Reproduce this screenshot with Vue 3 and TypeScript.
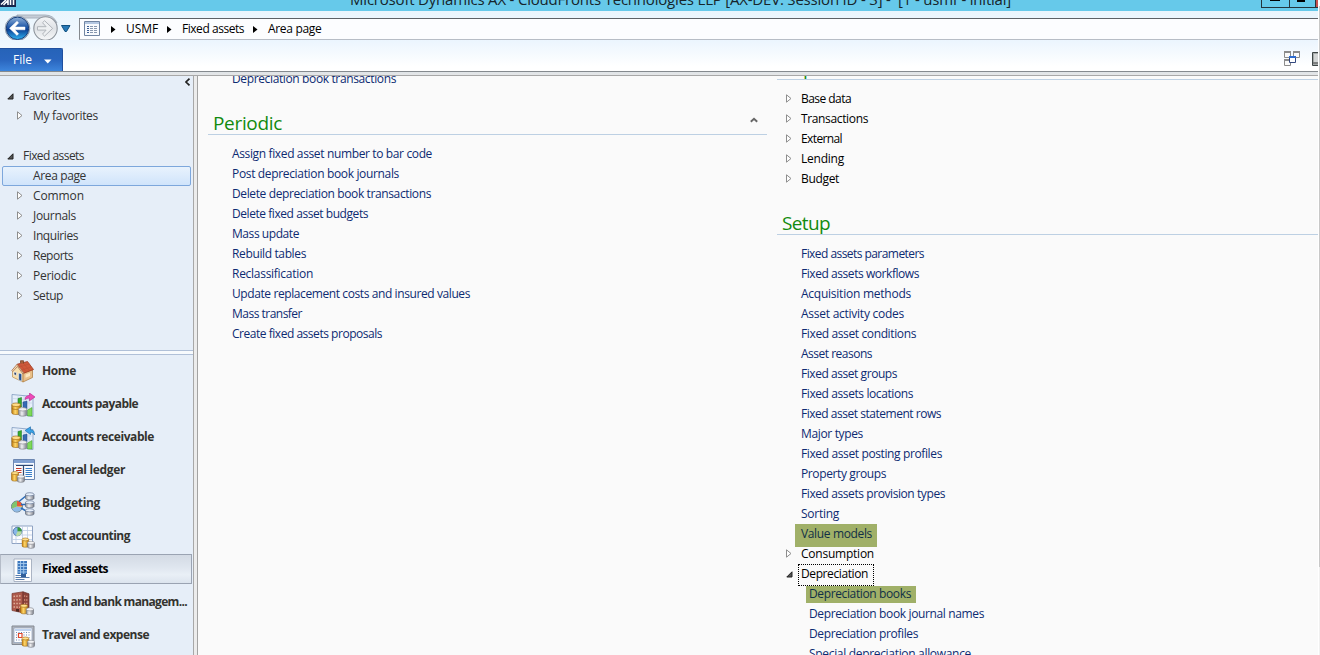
<script setup lang="ts">
interface Item { t: string; w: number; kind?: 'closed' | 'open' | 'sub'; mark?: 'wide' | 'tight' }

// Spreads the letters of a label so that it spans the given width.
const fit = (el: HTMLElement, { value }: { value: number }) => {
  el.style.letterSpacing = '0px'
  const natural = el.getBoundingClientRect().width
  const count = (el.textContent ?? '').length
  if (count) el.style.letterSpacing = `${((value - natural) / count).toFixed(3)}px`
}
const vFit = { mounted: fit }

const crumbs: Item[] = [
  { t: 'USMF', w: 32 }, { t: 'Fixed assets', w: 62 }, { t: 'Area page', w: 53.5 },
]
const tree = [
  { t: 'Common', w: 51 }, { t: 'Journals', w: 43 }, { t: 'Inquiries', w: 45 },
  { t: 'Reports', w: 40 }, { t: 'Periodic', w: 43 }, { t: 'Setup', w: 30 },
]
const modules = [
  { t: 'Home', w: 34, icon: 'home' },
  { t: 'Accounts payable', w: 96, icon: 'payable' },
  { t: 'Accounts receivable', w: 112, icon: 'receivable' },
  { t: 'General ledger', w: 83, icon: 'ledger' },
  { t: 'Budgeting', w: 58, icon: 'budget' },
  { t: 'Cost accounting', w: 88, icon: 'cost' },
  { t: 'Fixed assets', w: 66, icon: 'assets' },
  { t: 'Cash and bank managem...', w: 145, icon: 'bank' },
  { t: 'Travel and expense', w: 107, icon: 'travel' },
]
const periodic: Item[] = [
  { t: 'Assign fixed asset number to bar code', w: 200 },
  { t: 'Post depreciation book journals', w: 167 },
  { t: 'Delete depreciation book transactions', w: 199 },
  { t: 'Delete fixed asset budgets', w: 136 },
  { t: 'Mass update', w: 67 },
  { t: 'Rebuild tables', w: 74 },
  { t: 'Reclassification', w: 81 },
  { t: 'Update replacement costs and insured values', w: 238 },
  { t: 'Mass transfer', w: 70 },
  { t: 'Create fixed assets proposals', w: 150 },
]
const reports: Item[] = [
  { t: 'Base data', w: 50, kind: 'closed' },
  { t: 'Transactions', w: 67, kind: 'closed' },
  { t: 'External', w: 41, kind: 'closed' },
  { t: 'Lending', w: 43, kind: 'closed' },
  { t: 'Budget', w: 38, kind: 'closed' },
]
const setup: Item[] = [
  { t: 'Fixed assets parameters', w: 123 },
  { t: 'Fixed assets workflows', w: 118 },
  { t: 'Acquisition methods', w: 110 },
  { t: 'Asset activity codes', w: 103 },
  { t: 'Fixed asset conditions', w: 115 },
  { t: 'Asset reasons', w: 71 },
  { t: 'Fixed asset groups', w: 96 },
  { t: 'Fixed assets locations', w: 112 },
  { t: 'Fixed asset statement rows', w: 140 },
  { t: 'Major types', w: 62 },
  { t: 'Fixed asset posting profiles', w: 141 },
  { t: 'Property groups', w: 85 },
  { t: 'Fixed assets provision types', w: 144 },
  { t: 'Sorting', w: 38 },
  { t: 'Value models', w: 71, mark: 'wide' },
  { t: 'Consumption', w: 73, kind: 'closed' },
  { t: 'Depreciation', w: 67, kind: 'open' },
  { t: 'Depreciation books', w: 102, kind: 'sub', mark: 'tight' },
  { t: 'Depreciation book journal names', w: 175, kind: 'sub' },
  { t: 'Depreciation profiles', w: 109, kind: 'sub' },
  { t: 'Special depreciation allowance', w: 162, kind: 'sub' },
]
const rightSections = [
  { title: 'Reports', w: 64, items: reports },
  { title: 'Setup', w: 48, items: setup },
]
</script>

<template>
  <div class="window">
    <svg class="defs" width="0" height="0">
      <defs>
        <linearGradient id="gold" x1="0" x2="1" y1="0" y2="0">
          <stop offset="0" stop-color="#c07c10" /><stop offset=".4" stop-color="#ffd769" /><stop offset="1" stop-color="#b87408" />
        </linearGradient>
        <linearGradient id="silver" x1="0" x2="1" y1="0" y2="0">
          <stop offset="0" stop-color="#8d9097" /><stop offset=".4" stop-color="#f1f1f3" /><stop offset="1" stop-color="#7b7e88" />
        </linearGradient>
        <linearGradient id="backFill" x1="0" x2="0" y1="0" y2="1">
          <stop offset="0" stop-color="#8fb0d8" /><stop offset=".45" stop-color="#1f57a8" /><stop offset=".55" stop-color="#0c3f94" /><stop offset="1" stop-color="#2fb3f2" />
        </linearGradient>
        <linearGradient id="fwdFill" x1="0" x2="0" y1="0" y2="1">
          <stop offset="0" stop-color="#f4f5f7" /><stop offset=".5" stop-color="#dfe2e6" /><stop offset="1" stop-color="#f7f8f9" />
        </linearGradient>
        <symbol id="coins" viewBox="0 0 14 12">
          <path d="M.5 2.500v6.500c0 1.800 7 1.800 7 0V2.500z" fill="url(#gold)" stroke="#a06a14" stroke-width=".6" />
          <ellipse cx="4" cy="2.300" rx="3.500" ry="1.500" fill="#ffe08c" stroke="#a06a14" stroke-width=".6" />
          <path d="M6.300 6v4c0 2 7.200 2 7.200 0V6z" fill="url(#silver)" stroke="#70737b" stroke-width=".6" />
          <ellipse cx="9.900" cy="5.800" rx="3.600" ry="1.600" fill="#f2f2f4" stroke="#7d8088" stroke-width=".6" />
        </symbol>
        <symbol id="chart" viewBox="0 0 24 24">
          <path d="M1 1.500l21 2v20L1 20z" fill="#e6effa" stroke="#8aa3c5" stroke-width=".9" />
          <path d="M2 5.500l19 1.500M2 10h19M7 2v18M13 3v18M18 3v19" stroke="#c3d3e9" stroke-width=".7" />
          <path d="M7 5.500l3.500-1V14H7z" fill="#37ab2f" stroke="#187020" stroke-width=".5" />
          <path d="M12 9l4-1v8h-4z" fill="#366bb4" stroke="#1b4583" stroke-width=".5" />
          <path d="M16.500 17l4.500-2.500V23h-4.500z" fill="#7ed957" stroke="#3a9a28" stroke-width=".5" />
          <path d="M.8 12v8c0 2 8.600 2 8.600 0v-8z" fill="url(#gold)" stroke="#9c6710" stroke-width=".6" />
          <path d="M.8 15.300c1 1.600 7.600 1.600 8.600 0" fill="none" stroke="#9c6710" stroke-width=".6" />
          <ellipse cx="5.100" cy="11.800" rx="4.300" ry="1.800" fill="#ffdc86" stroke="#9c6710" stroke-width=".6" />
          <path d="M7.600 16.500v5c0 2.200 8.200 2.200 8.200 0v-5z" fill="url(#silver)" stroke="#74767c" stroke-width=".6" />
          <ellipse cx="11.700" cy="16.300" rx="4.100" ry="1.700" fill="#f0f0f1" stroke="#85878c" stroke-width=".6" />
        </symbol>
      </defs>
    </svg>

    <header class="titlebar">
      <svg class="app-icon" width="16" height="7" viewBox="0 0 16 7">
        <path d="M0 0h16v7H0z" fill="#16254c" /><path d="M1 4.500L6 0M3.500 5L8 .5V5M10.500 0v5M13.500 0v5" stroke="#fff" stroke-width="1.600" fill="none" />
      </svg>
      <span v-fit="661" class="title">Microsoft Dynamics AX - CloudFronts Technologies LLP [AX-DEV: Session ID - 3] -&nbsp; [1 - usmf - initial]</span>
      <div class="controls"><i class="min" /><i class="max" /><i class="close" /></div>
    </header>

    <nav class="address-row">
      <svg class="nav-buttons" width="76" height="29" viewBox="0 0 76 29">
        <path d="M17 4h28a13 13 0 0 1 12 8L50 7H17z" fill="#c5ccd6" stroke="#a9b2be" />
        <circle cx="17.500" cy="17.300" r="12.300" fill="#d8e1ec" stroke="#8793a5" stroke-width=".9" />
        <circle cx="17.500" cy="17.300" r="11.200" fill="url(#backFill)" stroke="#173e7a" />
        <path d="M9.500 17.300L17 10.300l1.600 1.500-3.700 4.200H25v2.800H14.900l3.700 4-1.600 1.600z" fill="#fff" stroke="#fff" stroke-width=".5" stroke-linejoin="round" />
        <circle cx="45.500" cy="17.500" r="11.700" fill="url(#fwdFill)" stroke="#8e949c" stroke-width="1.100" />
        <path d="M37.500 15.700h8.600l-3.600-4 2.100-2 8 7.700-8 7.700-2.100-2 3.600-4h-8.600z" fill="#eef0f2" stroke="#b1b5bb" />
        <path d="M61.500 14.500h8.500L66.500 20.500h-1.500z" fill="#2779b7" stroke="#125180" />
      </svg>
      <div class="address">
        <svg width="16" height="15" viewBox="0 0 16 15">
          <path d="M.5.5h15v14H.5z" fill="#f8fafd" stroke="#7185a2" /><path d="M1 1h14v2H1z" fill="#b4c7e1" />
          <path d="M3 5.500h2M3 7.500h2M3 9.500h2M3 11.500h2" stroke="#3b5e96" /><path d="M6 5.500h3M10 5.500h3M6 7.500h3M10 7.500h3M6 9.500h3M10 9.500h3M6 11.500h3M10 11.500h3" stroke="#8797ae" />
        </svg>
        <div v-for="c in crumbs" :key="c.t" class="crumb">
          <svg width="5" height="7" viewBox="0 0 5 7"><path d="M0 0l4.500 3.500L0 7z" /></svg>
          <span v-fit="c.w">{{ c.t }}</span>
        </div>
      </div>
    </nav>

    <div class="toolbar">
      <button class="file"><span v-fit="19">File</span><svg width="8" height="5" viewBox="0 0 8 5"><path d="M0 .5h7.500L3.800 4.500z" fill="#fff" /></svg></button>
      <svg class="tools" width="34" height="16" viewBox="0 0 34 16">
        <g fill="#fafafa" stroke="#8b8b8b"><path d="M.5.5h6v6h-6zM9.500.5h6v6h-6zM.5 8.500h6v6h-6z" /></g>
        <path d="M0 1h7M9 1h7M0 9h7" stroke="#8b8b8b" stroke-width="2" />
        <path d="M5.500 5.500h6v6h-6z" fill="#fff" stroke="#33487e" /><path d="M5 6h7" stroke="#2d6bd0" stroke-width="2" />
        <path d="M28.500 1.500h6v13h-6z" fill="#a4a9a9" stroke="#3e4646" /><path d="M30 3h4v8h-4z" fill="#d3d6d6" /><path d="M29 12h5" stroke="#555" />
      </svg>
    </div>
    <div class="rule" />

    <div class="body">
      <aside class="side">
        <div class="tree">
          <svg class="collapse" width="6" height="8" viewBox="0 0 6 8"><path d="M4.500.7L1 4l3.500 3.300" fill="none" stroke="#222" stroke-width="1.700" /></svg>
          <div class="node root"><svg width="7" height="7" viewBox="0 0 7 7"><path d="M6 .8V6H.8z" fill="#555" stroke="#222" /></svg><span v-fit="47">Favorites</span></div>
          <div class="node"><svg width="6" height="9" viewBox="0 0 6 9"><path d="M.5.8L5 4.500.5 8.200z" fill="#fff" stroke="#8d8d8d" /></svg><span v-fit="65">My favorites</span></div>
          <div class="node root gap"><svg width="7" height="7" viewBox="0 0 7 7"><path d="M6 .8V6H.8z" fill="#555" stroke="#222" /></svg><span v-fit="61">Fixed assets</span></div>
          <div class="node current"><span v-fit="53">Area page</span></div>
          <div v-for="n in tree" :key="n.t" class="node">
            <svg width="6" height="9" viewBox="0 0 6 9"><path d="M.5.8L5 4.500.5 8.200z" fill="#fff" stroke="#8d8d8d" /></svg><span v-fit="n.w">{{ n.t }}</span>
          </div>
        </div>
        <div class="splitter" />
        <div class="modules">
          <div v-for="m in modules" :key="m.t" class="module" :class="{ active: m.icon === 'assets' }">
            <svg width="24" height="24" viewBox="0 0 24 24">
              <g v-if="m.icon === 'home'">
                <path d="M1.500 10L6 5l6 7.500v9.500L1.500 17z" fill="#f7dfae" stroke="#b98c52" stroke-width=".7" />
                <path d="M12 13L21.500 9.500v8L12 22z" fill="#e9c08a" stroke="#a9773a" stroke-width=".7" />
                <path d="M6 4.300L16.500 1.500 22.500 9.500 12.500 13.300z" fill="#cf5a3a" stroke="#a13a22" stroke-width=".8" />
                <path d="M6 4.300L.8 10.500l1 1L6.500 6.500l5.500 7.500 1-.7z" fill="#f3d9b5" stroke="#a06848" stroke-width=".7" />
                <path d="M9 4.500l6 7M12.500 3.500l6 7M7.500 7l11-3M10 10l10.500-3" stroke="#b34a30" stroke-width=".4" />
                <path d="M9.500 3V.7h3V3.500" fill="#a8613c" stroke="#6f3c20" stroke-width=".7" />
                <path d="M7.700 13l3 1v7.200l-3-1.300z" fill="#24508f" stroke="#fff" stroke-width=".5" />
                <path d="M3 12l2.500.6v2.800L3 14.800z" fill="#31466c" stroke="#fff" stroke-width=".6" /><path d="M14.500 14.500l4.500-1.700V16l-4.500 1.800z" fill="#fbe7c1" />
              </g>
              <g v-else-if="m.icon === 'payable'">
                <use href="#chart" /><path d="M14 6.500c0-3 2-4 4.500-4V0L24 4l-5.500 3.800V5.200c-2 0-3 .2-4.500 1.300z" fill="#ee4ab8" stroke="#b5218a" stroke-width=".6" />
              </g>
              <g v-else-if="m.icon === 'receivable'">
                <use href="#chart" /><path d="M23.500 9c0-4-1.500-5.200-4-5.200V.8L14 4.500l5.500 4V6.200c2 0 3 .8 4 2.800z" fill="#3ba5e8" stroke="#1767a8" stroke-width=".6" />
              </g>
              <g v-else-if="m.icon === 'ledger'">
                <path d="M2.500.5h21v20h-21z" fill="#f9fbff" stroke="#6d87b1" /><path d="M3 1h20v3H3z" fill="#7f9fd0" /><path d="M4 5.500h18" stroke="#c5d4e9" />
                <path d="M5 6.500h17M12.500 6v14" stroke="#2d4770" stroke-width="1.200" />
                <path d="M5 9.500h5.500M5 11.500h5.500M5 13.500h5.500" stroke="#c93a2a" /><path d="M14.500 9.500H21M14.500 11.500H21M14.500 13.500H21M14.500 15.500H21M14.500 17.500H21" stroke="#3a7fc9" />
                <use href="#coins" x="0" y="11.500" width="14" height="12.500" />
              </g>
              <g v-else-if="m.icon === 'budget'">
                <circle cx="6" cy="14.500" r="5.500" fill="#eecb57" stroke="#58749c" /><path d="M6 14.500V9A5.500 5.500 0 0 0 1 16.500z" fill="#7fc46f" /><path d="M6 14.500l5.500-.5A5.500 5.500 0 0 0 6 9z" fill="#e45a3a" /><path d="M6 14.500l5.300 1A5.500 5.500 0 0 1 1 16.700z" fill="#8fbbe8" />
                <path d="M8 9.500L16 3M10 12.500h6M10 16l7 4" stroke="#2b6cb9" stroke-width="1.500" />
                <g fill="url(#silver)" stroke="#5f6b80" stroke-width=".7"><path d="M14.500 2.500v4c0 1.700 8.500 1.700 8.500 0v-4z" /><path d="M14.500 10.500v4c0 1.700 8.500 1.700 8.500 0v-4z" /><path d="M14.500 18.500v3.500c0 1.700 8.500 1.700 8.500 0v-3.500z" /></g>
                <g fill="#e7effa" stroke="#647695" stroke-width=".7"><ellipse cx="18.750" cy="2.300" rx="4.250" ry="1.600" /><ellipse cx="18.750" cy="10.300" rx="4.250" ry="1.600" /><ellipse cx="18.750" cy="18.300" rx="4.250" ry="1.600" /></g>
              </g>
              <g v-else-if="m.icon === 'cost'">
                <path d="M1 1h20.500v17.500H1z" fill="#fbfcff" stroke="#8fa3c3" /><path d="M1.500 5.500h19.500M1.500 10h19.500M1.500 14.500h19.500M5 1.500v17M11.500 1.500v17M16.500 1.500v17" stroke="#bccde6" stroke-width=".8" />
                <circle cx="6.500" cy="6.500" r="4.300" fill="#89b7e8" stroke="#406a9e" stroke-width=".8" /><path d="M6.500 6.500V2.200A4.300 4.300 0 0 1 10.800 6.500z" fill="#3b9a37" /><path d="M6.500 6.500h4.300a4.300 4.300 0 0 1-6 4z" fill="#b9dba4" />
                <use href="#coins" x="10.500" y="12" width="13.500" height="12" />
              </g>
              <g v-else-if="m.icon === 'assets'">
                <path d="M3 1h17.500v22.500H3z" fill="#fdfdfe" stroke="#a3adbd" stroke-width=".9" /><path d="M6.500 3h9.500v13H6.500z" fill="#3e78bd" /><path d="M9.500 3v13M12.700 3v13M6.500 5.500H16M6.500 8.500H16M6.500 11.500H16M6.500 14H16" stroke="#a6cbee" stroke-width=".9" />
                <path d="M4.500 17.500h6M4.500 19.500h14M4.500 21.500h9" stroke="#5c7fae" /><path d="M10 16h5v3h-5z" fill="#315e99" />
              </g>
              <g v-else-if="m.icon === 'bank'">
                <path d="M1 2.500L12 .8v21L1 19.500z" fill="#ad594b" stroke="#793b32" stroke-width=".7" /><path d="M12 .8l6 2v18l-6 1z" fill="#8c4339" stroke="#68312b" stroke-width=".7" />
                <path d="M2.500 5.500l8-.8M2.500 9l8-.3M2.500 12.500h8M2.500 16l8 .3" stroke="#e0b09a" stroke-width="1.500" stroke-dasharray="1.500 1.300" /><path d="M13 5l4 .6M13 9h4M13 12.500h4" stroke="#d7947f" stroke-width="1.300" stroke-dasharray="1.200 1" />
                <path d="M5 18h3v3l-3-.7z" fill="#502922" /><use href="#coins" x="9" y="12.500" width="14" height="12" />
              </g>
              <g v-else>
                <path d="M1 2h22v18.500H1z" fill="#b2b6bd" stroke="#838993" /><path d="M3 4h18v14.500H3z" fill="#fcfdff" stroke="#8d9fba" stroke-width=".7" />
                <path d="M4 6h16" stroke="#bed2ef" stroke-width="2" /><path d="M5 8.500h15M5 11h15M5 13.500h15M5 16h15" stroke="#6d86ad" stroke-dasharray="1 1.500" />
                <path d="M7.500 9.500h3.500v4H7.500z" fill="#fff" stroke="#e0482c" stroke-width="1.200" /><use href="#coins" x="10.500" y="12" width="13.500" height="12" />
              </g>
            </svg>
            <span v-fit="m.w">{{ m.t }}</span>
          </div>
        </div>
      </aside>
      <div class="gutter" />

      <main class="content">
        <section class="col left">
          <div class="item"><span v-fit="164">Depreciation book transactions</span></div>
          <h2><span v-fit="69">Periodic</span><svg width="8" height="6" viewBox="0 0 8 6"><path d="M.800 4.800L4 1.800l3.200 3" fill="none" stroke="#666" stroke-width="1.900" /></svg></h2>
          <div v-for="i in periodic" :key="i.t" class="item"><span v-fit="i.w">{{ i.t }}</span></div>
        </section>
        <section class="col right">
          <template v-for="s in rightSections" :key="s.title">
            <h2><span v-fit="s.w">{{ s.title }}</span></h2>
            <div v-for="i in s.items" :key="i.t" class="item" :class="[i.kind, i.mark]">
              <svg v-if="i.kind === 'closed'" width="6" height="9" viewBox="0 0 6 9"><path d="M.5.8L5 4.500.5 8.200z" fill="#fff" stroke="#8d8d8d" /></svg>
              <svg v-if="i.kind === 'open'" width="7" height="7" viewBox="0 0 7 7"><path d="M6 .8V6H.8z" fill="#555" stroke="#222" /></svg>
              <span v-fit="i.w">{{ i.t }}</span>
            </div>
          </template>
        </section>
      </main>
    </div>
    <div class="edge" />
  </div>
</template>

<style scoped>
.window { position: relative; width: 1320px; height: 655px; overflow: hidden; display: flex; flex-direction: column; background: #fff; font: 12px/20px "Open Sans", "Noto Sans", sans-serif; color: #333; }
.window * { box-sizing: border-box; }
.window span { white-space: pre; flex: none; }
svg { display: block; flex: none; }
.defs { position: absolute; }
.titlebar { position: relative; height: 11px; flex: none; background: #66c9ea; overflow: hidden; display: flex; margin-right: 2px; }
.title { font-size: 15px; line-height: 20px; color: #17252b; margin: -11px 0 0 334px; height: 20px; }
.controls { display: flex; margin-left: auto; height: 8px; border-left: 1px solid #24343c; border-bottom: 1px solid #24343c; }
.controls i { display: block; height: 7px; border-right: 1px solid #24343c; }
.min { width: 28px; background: linear-gradient(#000, #000) 8px 0 / 10px 1px no-repeat; }
.max { width: 26px; background: linear-gradient(#000, #000) 7px 0 / 8px 2px no-repeat; }
.controls .close { width: 2px; border: 0; background: #c75050; }
.address-row { height: 29px; flex: none; display: flex; background: linear-gradient(#e9f5fd, #f2f8fe); margin-right: 2px; }
.nav-buttons { margin-right: 3px; }
.address { flex: 1; margin-top: 7px; height: 22px; background: #fcfdff; border: 1px solid #b7bdc6; border-top-color: #5c6167; border-left-color: #85898e; border-right: 0; display: flex; align-items: center; padding-left: 4px; color: #000; }
.address > svg { margin: -1px 11px 0 0; }
.crumb { display: flex; align-items: center; }
.crumb svg { margin: 1px 10px 0 0; }
.crumb + .crumb { margin-left: 9px; }
.toolbar { height: 31px; flex: none; display: flex; justify-content: space-between; align-items: flex-end; background: linear-gradient(#ebf5fe, #fff 85%); margin-right: 2px; }
.file { width: 63px; height: 23px; padding: 0 0 0 13px; border: 1px solid #1f4f9f; border-left: 0; border-bottom: 0; border-radius: 0 2px 0 0; background: linear-gradient(#2663b8, #2a66bf 50%, #3d85dc); color: #fff; font: inherit; display: flex; align-items: center; }
.file svg { margin: 2px 0 0 12px; }
.tools { margin-bottom: 4px; }
.rule { flex: none; height: 5px; margin-right: 2px; background: linear-gradient(#e0e4e7, #e4e6e8); border-top: 1px solid #858a8f; border-bottom: 1px solid #a8a8a8; }
.body { flex: 1; min-height: 0; display: flex; margin-right: 2px; }
.side { width: 194px; flex: none; background: #e6eef8; border-right: 1px solid #a8a8a8; display: flex; flex-direction: column; overflow: hidden; }
.tree { position: relative; height: 274px; flex: none; padding-top: 10px; }
.collapse { position: absolute; left: 185px; top: 2px; }
.node { display: flex; align-items: center; height: 20px; padding-left: 17px; }
.node svg { margin: -1px 10px 0 0; }
.root { padding-left: 7px; }
.root svg { margin: 0 9px 0 0; }
.gap { margin-top: 20px; }
.current { margin: 0 2px; padding-left: 30px; border: 1px solid #7da7dc; border-radius: 2px; background: linear-gradient(#e8f2fd, #d0e4fb); }
.splitter { flex: none; height: 5px; background: #f7fafd; border-top: 1px solid #b0c0d8; border-bottom: 1px solid #b0c0d8; }
.modules { margin-top: -1px; color: #33332f; font-weight: 700; }
.module { display: flex; height: 33px; padding-left: 11px; line-height: 33px; align-items: flex-start; }
.module svg { margin: 6px 7px 0 0; }
.module.active { height: 30px; width: 192px; margin: 2px 0 1px; padding-left: 10px; line-height: 28px; border: 1px solid #9aa3b2; border-left-color: #b5bcc8; color: #000; background: linear-gradient(#d3dae4, #dfe6ef 45%, #e9eff6 70%, #dce4ee); }
.module.active svg { margin-top: 3px; }
.gutter { width: 4px; flex: none; background: #ececec; border-right: 1px solid #a3a3a3; }
.content { flex: 1; min-width: 0; background: #fafafa; display: flex; overflow: hidden; padding-left: 10px; }
.left { width: 559px; flex: none; margin-top: -7px; }
.right { flex: 1; margin: -42px 0 0 10px; }
h2 { margin: 0 0 9px; height: 46px; padding: 21px 0 0 5px; border-bottom: 1px solid #bdd0e3; font-size: 19px; font-weight: 400; line-height: 26px; color: #128a0e; display: flex; justify-content: space-between; align-items: flex-start; }
h2 svg { margin: 7px 9px 0 0; }
.item { position: relative; height: 20px; padding-left: 24px; display: flex; align-items: center; color: #0d2b72; }
.closed, .open { padding-left: 9px; color: #000; }
.closed svg { margin: -1px 9px 0 0; }
.open svg { margin: 1px 4px 0 0; }
.open span { position: relative; margin-left: 4px; }
.open span::after { content: ""; position: absolute; left: -3px; top: 0; width: 74px; height: 20px; border: 1px dotted #000; }
.sub { padding-left: 32px; }
.wide, .tight { color: #102f45; z-index: 0; }
.wide::before, .tight::before { content: ""; position: absolute; z-index: -1; background: #a0b068; }
.wide::before { left: 18px; top: 0; width: 82px; height: 23px; }
.tight::before { left: 29px; top: 2px; width: 110px; height: 17px; }
.edge { position: absolute; right: 0; top: 6px; width: 1px; height: 649px; background: linear-gradient(#c8c8c8 561px, #f0f0f0 561px); }
</style>

<style>
body { margin: 0; overflow: hidden; }
</style>
